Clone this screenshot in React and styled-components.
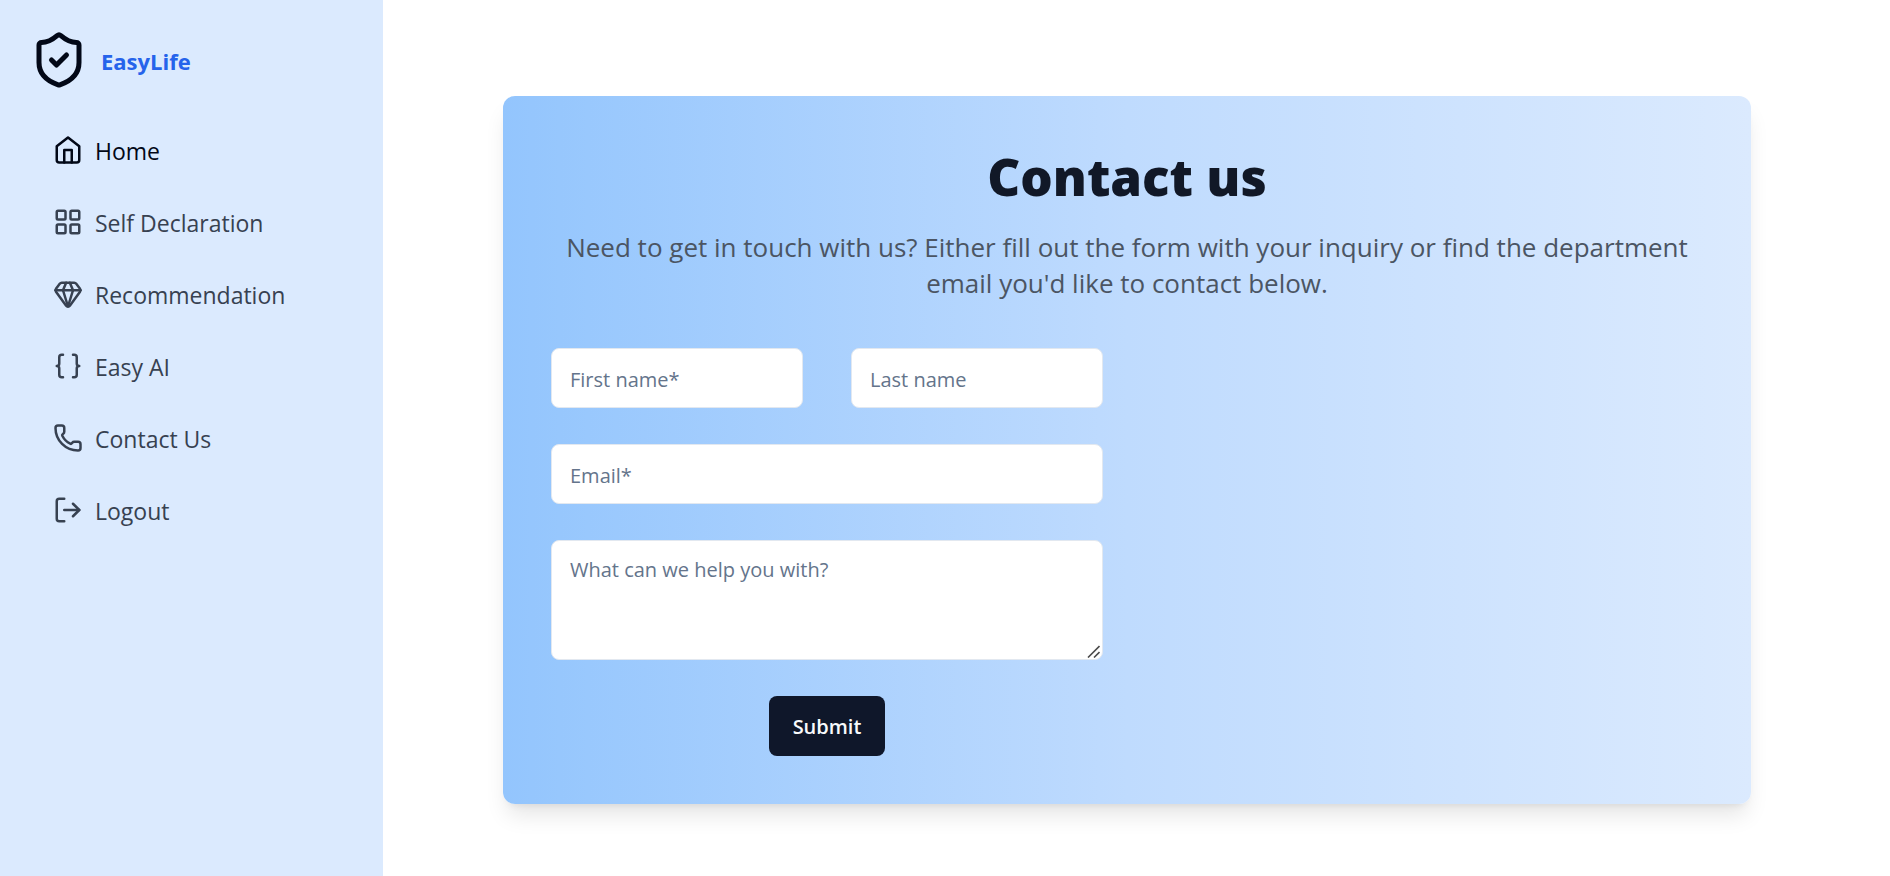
import React from "react";
import styled, { createGlobalStyle } from "styled-components";
import {
  ShieldCheck,
  LayoutGrid,
  Gem,
  Braces,
  Phone,
  LogOut,
} from "lucide-react";

const GlobalStyle = createGlobalStyle`
  *, *::before, *::after { box-sizing: border-box; }
  body {
    margin: 0;
    background: #ffffff;
    color: #020817;
    font-family: "Open Sans", "Noto Sans", sans-serif;
  }
  h1, p, ul { margin: 0; padding: 0; }
`;

const Page = styled.div`
  display: flex;
  min-height: 100vh;
`;

const Sidebar = styled.aside`
  flex: none;
  width: 383px;
  padding: 30px 29px;
  background: #dbeafe;
`;

const Brand = styled.a`
  display: flex;
  align-items: center;
  gap: 12px;
  color: #020817;
  text-decoration: none;
`;

const BrandName = styled.span`
  padding-top: 2px;
  color: #2563eb;
  font-size: 22px;
  font-weight: 700;
  line-height: 36px;
`;

const NavList = styled.ul`
  display: flex;
  flex-direction: column;
  gap: 12px;
  margin-top: 30px;
  padding: 0 12px;
  list-style: none;
`;

const NavLink = styled.a`
  display: flex;
  align-items: center;
  gap: 12px;
  height: 60px;
  padding: 0 12px;
  border-radius: 8px;
  color: ${({ $active }) => ($active ? "#020817" : "#374151")};
  font-size: 23px;
  line-height: 36px;
  text-decoration: none;
`;

const NavLabel = styled.span`
  padding-top: 2px;
`;

const Main = styled.main`
  flex: 1;
  min-width: 0;
  padding: 96px 139px 72px 120px;
`;

const Card = styled.section`
  padding: 48px;
  border-radius: 12px;
  background: linear-gradient(to right, #93c5fd, #bfdbfe, #dbeafe);
  box-shadow: 0 15px 22px -4px rgba(0, 0, 0, 0.1),
    0 6px 9px -6px rgba(0, 0, 0, 0.1);
`;

const Title = styled.h1`
  color: #111827;
  font-size: 51px;
  font-weight: 800;
  line-height: 64px;
  text-align: center;
`;

const Intro = styled.p`
  margin-top: 21px;
  color: #4b5563;
  font-size: 26px;
  line-height: 36px;
  text-align: center;
`;

const Form = styled.form`
  display: grid;
  grid-template-columns: 1fr 1fr;
  gap: 36px 48px;
  width: calc(50% - 24px);
  margin-top: 47px;
`;

const Field = styled.input`
  grid-column: ${({ $wide }) => ($wide ? "1 / -1" : "auto")};
  width: 100%;
  min-width: 0;
  height: 60px;
  padding: 2px 18px 0;
  border: 1px solid #e2e8f0;
  border-radius: 8px;
  background: #ffffff;
  color: #020817;
  font-family: inherit;
  font-size: 20px;
  line-height: 30px;
  &::placeholder { color: #64748b; opacity: 1; }
`;

const MessageBox = styled.div`
  position: relative;
  grid-column: 1 / -1;
`;

const MessageField = styled(Field)`
  display: block;
  height: 120px;
  padding: 14px 18px;
  resize: vertical;
  &::-webkit-resizer { background: transparent; }
`;

const ResizeGrip = styled.svg`
  position: absolute;
  right: 3px;
  bottom: 2px;
  pointer-events: none;
`;

const SubmitButton = styled.button`
  grid-column: 1 / -1;
  justify-self: center;
  height: 60px;
  padding: 2px 24px 0;
  border: 0;
  border-radius: 8px;
  background: #0f172a;
  color: #f8fafc;
  font-family: inherit;
  font-size: 20px;
  font-weight: 600;
  line-height: 30px;
`;

function HomeIcon({ size }) {
  return (
    <svg
      width={size}
      height={size}
      viewBox="0 0 24 24"
      fill="none"
      stroke="currentColor"
      strokeWidth="2"
      strokeLinecap="round"
      strokeLinejoin="round"
      aria-hidden="true"
    >
      <path d="m3 9 9-7 9 7v11a2 2 0 0 1-2 2H5a2 2 0 0 1-2-2z" />
      <polyline points="9 22 9 12 15 12 15 22" />
    </svg>
  );
}

const NAV_ITEMS = [
  { label: "Home", icon: HomeIcon, active: true },
  { label: "Self Declaration", icon: LayoutGrid },
  { label: "Recommendation", icon: Gem },
  { label: "Easy AI", icon: Braces },
  { label: "Contact Us", icon: Phone },
  { label: "Logout", icon: LogOut },
];

export default function App() {
  return (
    <>
      <GlobalStyle />
      <Page>
        <Sidebar>
          <Brand href="#">
            <ShieldCheck size={60} strokeWidth={2} aria-hidden="true" />
            <BrandName>EasyLife</BrandName>
          </Brand>
          <nav>
            <NavList>
              {NAV_ITEMS.map(({ label, icon: Icon, active }) => (
                <li key={label}>
                  <NavLink href="#" $active={active}>
                    <Icon size={30} aria-hidden="true" />
                    <NavLabel>{label}</NavLabel>
                  </NavLink>
                </li>
              ))}
            </NavList>
          </nav>
        </Sidebar>
        <Main>
          <Card>
            <Title>Contact us</Title>
            <Intro>
              Need to get in touch with us? Either fill out the form with your
              inquiry or find the department email you'd like to contact below.
            </Intro>
            <Form onSubmit={(event) => event.preventDefault()}>
              <Field type="text" placeholder="First name*" aria-label="First name" />
              <Field type="text" placeholder="Last name" aria-label="Last name" />
              <Field $wide type="email" placeholder="Email*" aria-label="Email" />
              <MessageBox>
                <MessageField
                  as="textarea"
                  placeholder="What can we help you with?"
                  aria-label="What can we help you with?"
                />
                <ResizeGrip
                  width="13"
                  height="13"
                  viewBox="0 0 13 13"
                  stroke="#4b4b4b"
                  strokeWidth="1.6"
                  aria-hidden="true"
                >
                  <path d="M1 12.5 12.5 1M7 12.5 12.5 7" />
                </ResizeGrip>
              </MessageBox>
              <SubmitButton type="submit">Submit</SubmitButton>
            </Form>
          </Card>
        </Main>
      </Page>
    </>
  );
}
